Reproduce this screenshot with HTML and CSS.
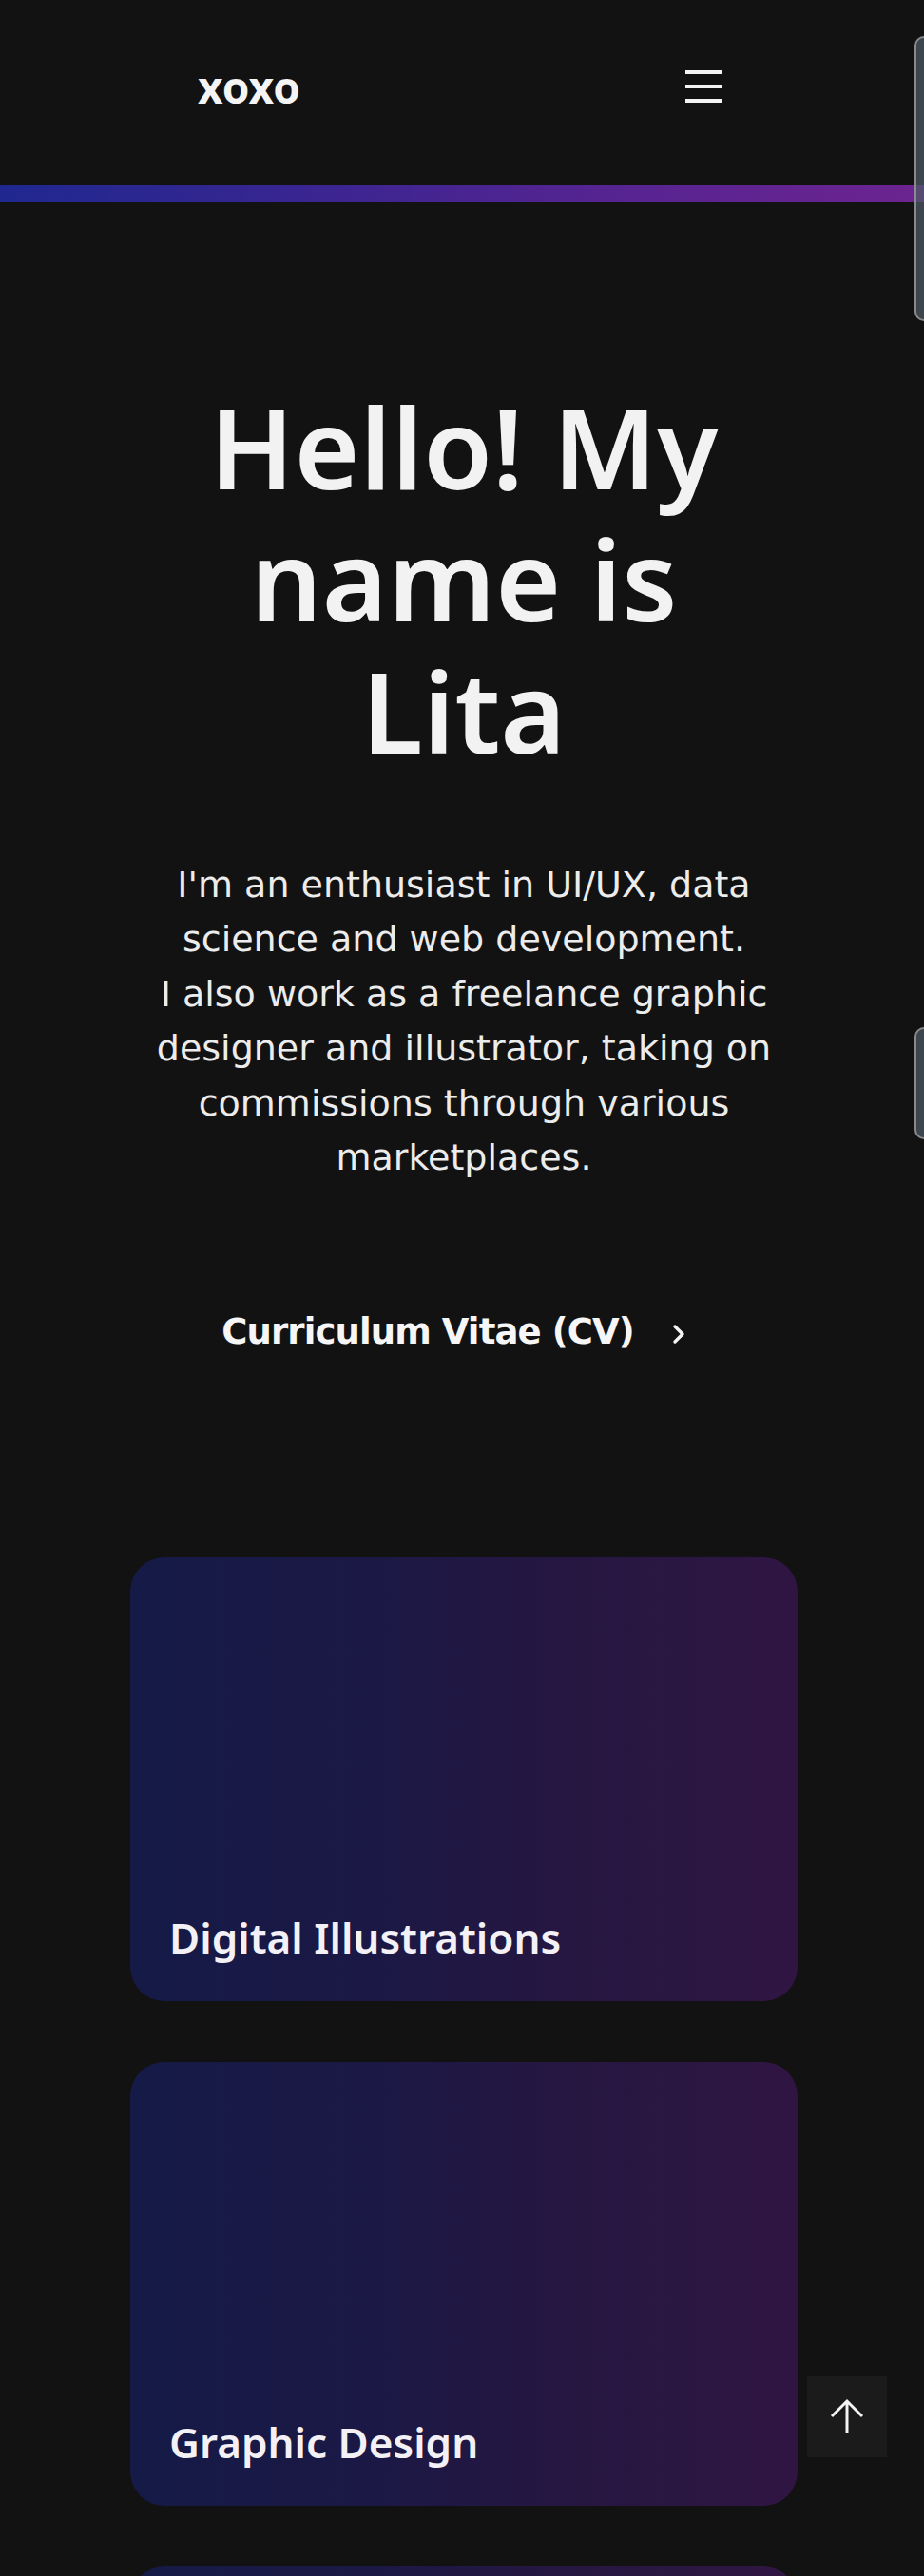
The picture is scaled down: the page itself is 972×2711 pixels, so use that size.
FILE: index.html
```html
<!DOCTYPE html>
<html lang="en">
<head>
<meta charset="utf-8">
<title>xoxo</title>
<link rel="stylesheet" href="styles.css">
</head>
<body>
<header class="site-header">
  <a class="logo" href="#">xoxo</a>
  <button class="menu-btn" aria-label="Menu">
    <span class="menu-line"></span>
    <span class="menu-line"></span>
    <span class="menu-line"></span>
  </button>
</header>
<div class="accent-bar"></div>

<main>
  <section class="hero">
    <h1 class="hero-title">Hello! My name is Lita</h1>
    <p class="hero-text">I'm an enthusiast in UI/UX, data science and web development.<br>I also work as a freelance graphic designer and illustrator, taking on commissions through various marketplaces.</p>
    <div class="cv-row">
      <a class="cv-link" href="#">
        <span>Curriculum Vitae (CV)</span>
        <svg class="cv-chevron" width="14" height="22" viewBox="0 0 14 22" aria-hidden="true"><polyline points="3,3 11,11 3,19" fill="none" stroke="#f4f4f4" stroke-width="3.4" stroke-linecap="round" stroke-linejoin="round"/></svg>
      </a>
    </div>
  </section>

  <section class="works">
    <a class="work-card" href="#"><h2 class="work-title">Digital Illustrations</h2></a>
    <a class="work-card" href="#"><h2 class="work-title">Graphic Design</h2></a>
    <a class="work-card" href="#" aria-label="More works"></a>
  </section>
</main>

<button class="to-top" aria-label="Back to top">
  <svg width="36" height="38" viewBox="0 0 36 38" aria-hidden="true"><path d="M18 3 V37 M2 19 L18 3 L34 19" fill="none" stroke="#f4f4f4" stroke-width="3"/></svg>
</button>

<div class="side-tab side-tab-top"></div>
<div class="side-tab side-tab-mid"></div>
</body>
</html>
```

FILE: styles.css
```css
* { box-sizing: border-box; }

html, body {
  margin: 0;
  padding: 0;
  background: #121212;
  color: #f2f2f2;
}

body {
  font-family: "DejaVu Sans", "Noto Sans", sans-serif;
}

a { color: inherit; text-decoration: none; }

.site-header {
  height: 195px;
  display: flex;
  align-items: center;
  justify-content: space-between;
  padding: 0 213px 0 208px;
}

.logo {
  font-family: "Noto Sans", "DejaVu Sans", sans-serif;
  font-weight: 700;
  font-size: 46px;
  line-height: 1;
  color: #f4f4f4;
  margin-top: -14px;
}

.menu-btn {
  background: none;
  border: 0;
  padding: 0;
  width: 38px;
  display: flex;
  flex-direction: column;
  gap: 11px;
  margin-top: -14px;
}

.menu-line {
  display: block;
  width: 38px;
  height: 4px;
  background: #f4f4f4;
}

.accent-bar {
  height: 18px;
  background: linear-gradient(90deg, #1f288f 0%, #3b2591 35%, #552491 65%, #6c2490 100%);
}

.hero {
  padding: 187px 133px 0 137px;
  text-align: center;
}

.hero-title {
  max-width: 600px;
  margin: 0 auto;
  font-family: "Noto Sans", "DejaVu Sans", sans-serif;
  font-weight: 600;
  font-size: 118px;
  line-height: 139px;
  color: #f2f2f2;
}

.hero-text {
  margin: 86px 0 0;
  font-size: 38px;
  line-height: 57.4px;
  color: #ececec;
}

.cv-row {
  margin-top: 129px;
  display: flex;
  justify-content: center;
}

.cv-link {
  display: inline-flex;
  align-items: center;
  gap: 40px;
  padding-right: 22px;
  font-weight: 700;
  font-size: 37px;
  line-height: 52.5px;
  letter-spacing: -0.9px;
  color: #f6f6f6;
}

.cv-chevron { display: block; margin-top: 2px; }

.works {
  padding: 210px 133px 0 137px;
  display: flex;
  flex-direction: column;
  gap: 64px;
}

.work-card {
  height: 467px;
  border-radius: 36px;
  background: linear-gradient(90deg, #151a47 0%, #1b1845 35%, #251741 65%, #301543 100%);
  display: flex;
  align-items: flex-end;
  padding: 0 41px 40px;
}

.work-title {
  margin: 0;
  font-family: "Noto Sans", "DejaVu Sans", sans-serif;
  font-weight: 600;
  font-size: 44px;
  line-height: 52.8px;
  color: #f3f1f6;
}

.to-top {
  position: fixed;
  right: 39px;
  bottom: 125px;
  width: 84px;
  height: 86px;
  background: #1b1b1b;
  border: 0;
  padding: 0;
  display: flex;
  align-items: center;
  justify-content: center;
}

.side-tab {
  position: fixed;
  right: -12px;
  width: 22px;
  background: rgba(78, 90, 100, 0.72);
  border: 2px solid rgba(150, 150, 150, 0.85);
  border-radius: 10px;
}

.side-tab-top { top: 38px; height: 300px; }
.side-tab-mid { top: 1081px; height: 118px; }
```
